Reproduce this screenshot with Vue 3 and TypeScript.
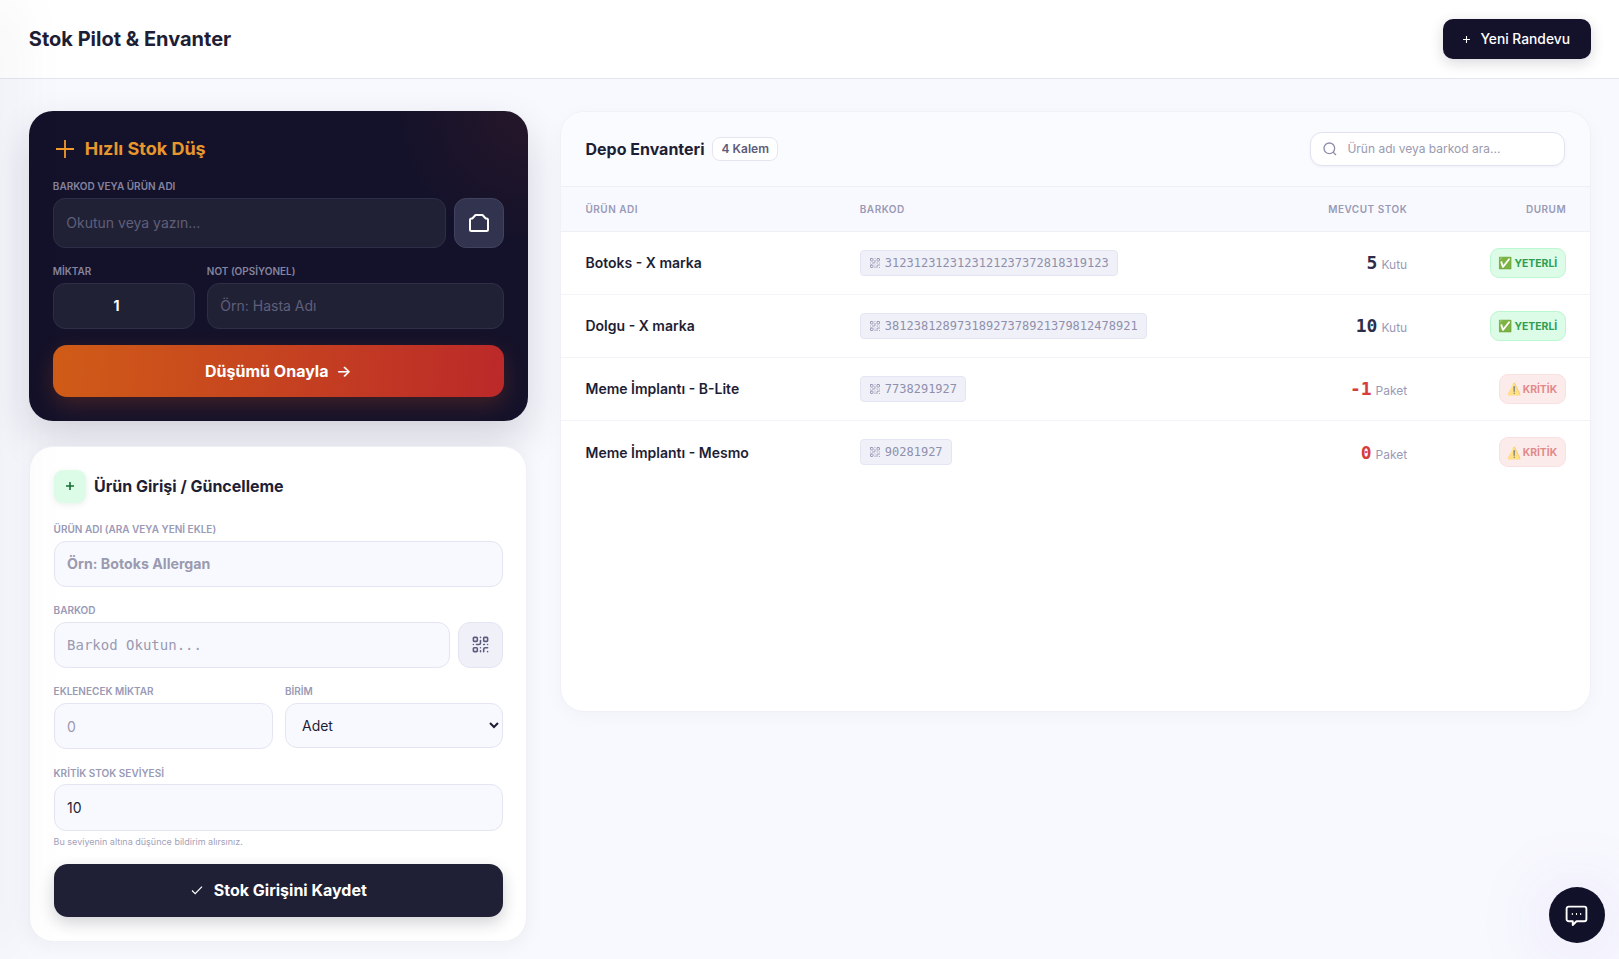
<script setup lang="ts">
interface StockItem {
  name: string
  barcode: string
  stock: number
  unit: string
  critical: boolean
}

const items: StockItem[] = [
  { name: 'Botoks - X marka', barcode: '3123123123123121237372818319123', stock: 5, unit: 'Kutu', critical: false },
  { name: 'Dolgu - X marka', barcode: '38123812897318927378921379812478921', stock: 10, unit: 'Kutu', critical: false },
  { name: 'Meme İmplantı - B-Lite', barcode: '7738291927', stock: -1, unit: 'Paket', critical: true },
  { name: 'Meme İmplantı - Mesmo', barcode: '90281927', stock: 0, unit: 'Paket', critical: true }
]

// lucide qr-code, used on the scan button and in the barcode chips
const qrPaths =
  'M4 3h3a1 1 0 0 1 1 1v3a1 1 0 0 1-1 1H4a1 1 0 0 1-1-1V4a1 1 0 0 1 1-1zM17 3h3a1 1 0 0 1 1 1v3a1 1 0 0 1-1 1h-3a1 1 0 0 1-1-1V4a1 1 0 0 1 1-1zM4 16h3a1 1 0 0 1 1 1v3a1 1 0 0 1-1 1H4a1 1 0 0 1-1-1v-3a1 1 0 0 1 1-1zM21 16h-3a2 2 0 0 0-2 2v3M21 21v.01M12 7v3a2 2 0 0 1-2 2H7M3 12h.01M12 3h.01M12 16v.01M16 12h1M21 12v.01M12 21v-1'
</script>

<template>
  <div class="page">
    <div class="edge-shadow"></div>

    <header class="topbar">
      <h1 class="page-title">Stok Pilot &amp; Envanter</h1>
      <button class="new-btn">
        <svg class="new-plus" viewBox="0 0 10 10" aria-hidden="true"><path d="M5 1.200v7.600M1.200 5h7.600" /></svg>
        Yeni Randevu
      </button>
    </header>

    <main class="layout">
      <div class="left-col">
        <section class="quick-card">
          <h2 class="quick-title">
            <svg class="quick-plus" viewBox="0 0 18 18" aria-hidden="true"><path d="M9 0v18M0 9h18" /></svg>
            Hızlı Stok Düş
          </h2>

          <label class="dark-label">BARKOD VEYA ÜRÜN ADI</label>
          <div class="scan-row">
            <input class="dark-input scan-input" placeholder="Okutun veya yazın..." />
            <button class="camera-btn" aria-label="Kamera">
              <svg viewBox="0 0 20 18" width="20" height="18" aria-hidden="true">
                <path
                  d="M6.500 1h7l3.200 3.500h.8a1.500 1.500 0 0 1 1.500 1.500v9.500a1.500 1.500 0 0 1-1.500 1.500h-15A1.500 1.500 0 0 1 1 15.500V6a1.500 1.500 0 0 1 1.500-1.500h.8z"
                />
              </svg>
            </button>
          </div>

          <div class="qty-row">
            <div>
              <label class="dark-label">MİKTAR</label>
              <input class="dark-input qty-input" value="1" />
            </div>
            <div>
              <label class="dark-label">NOT (OPSİYONEL)</label>
              <input class="dark-input note-input" placeholder="Örn: Hasta Adı" />
            </div>
          </div>

          <button class="confirm-btn">Düşümü Onayla <span class="arrow">→</span></button>
        </section>

        <section class="entry-card">
          <div class="entry-head">
            <span class="entry-icon">
              <svg viewBox="0 0 10 10" width="10" height="10" aria-hidden="true"><path d="M5 1v8M1 5h8" /></svg>
            </span>
            <h2 class="entry-title">Ürün Girişi / Güncelleme</h2>
          </div>

          <label class="field-label">ÜRÜN ADI (ARA VEYA YENİ EKLE)</label>
          <input class="light-input name-input" placeholder="Örn: Botoks Allergan" />

          <label class="field-label next">BARKOD</label>
          <div class="barcode-row">
            <input class="light-input mono-input" placeholder="Barkod Okutun..." />
            <button class="qr-btn" aria-label="Barkod tara">
              <svg viewBox="0 0 24 24" width="19" height="19" aria-hidden="true"><path :d="qrPaths" /></svg>
            </button>
          </div>

          <div class="unit-row">
            <div>
              <label class="field-label next">EKLENECEK MİKTAR</label>
              <input class="light-input" placeholder="0" />
            </div>
            <div>
              <label class="field-label next">BİRİM</label>
              <select class="light-input unit-select">
                <option>Adet</option>
                <option>Kutu</option>
                <option>Paket</option>
              </select>
            </div>
          </div>

          <label class="field-label next">KRİTİK STOK SEVİYESİ</label>
          <input class="light-input" value="10" />
          <p class="help">Bu seviyenin altına düşünce bildirim alırsınız.</p>

          <button class="save-btn">
            <svg viewBox="0 0 12 12" width="12" height="12" aria-hidden="true"><path d="M1 6.500 4.200 9.600 11 2.600" /></svg>
            Stok Girişini Kaydet
          </button>
        </section>
      </div>

      <section class="inventory">
        <div class="inv-head">
          <div class="inv-title-wrap">
            <h2 class="inv-title">Depo Envanteri</h2>
            <span class="count-badge">4 Kalem</span>
          </div>
          <div class="search">
            <svg viewBox="0 0 24 24" width="16" height="16" aria-hidden="true">
              <circle cx="11" cy="11" r="8" />
              <path d="m21 21-4.300-4.300" />
            </svg>
            <input placeholder="Ürün adı veya barkod ara..." />
          </div>
        </div>

        <div class="grid-row table-head">
          <span>ÜRÜN ADI</span>
          <span>BARKOD</span>
          <span class="to-right">MEVCUT STOK</span>
          <span class="to-right">DURUM</span>
        </div>

        <div v-for="item in items" :key="item.barcode" class="grid-row item-row">
          <span class="item-name">{{ item.name }}</span>
          <span class="barcode-cell">
            <span class="chip">
              <svg viewBox="0 0 24 24" width="12" height="12" aria-hidden="true"><path :d="qrPaths" /></svg>
              {{ item.barcode }}
            </span>
          </span>
          <span class="to-right stock-cell">
            <b class="stock-num" :class="{ low: item.critical }">{{ item.stock }}</b>
            <span class="unit">{{ item.unit }}</span>
          </span>
          <span class="to-right">
            <span class="status" :class="item.critical ? 'status-bad' : 'status-ok'">
              <span class="status-emoji">{{ item.critical ? '⚠️' : '✅' }}</span>{{ item.critical ? 'KRİTİK' : 'YETERLİ' }}
            </span>
          </span>
        </div>
      </section>
    </main>

    <button class="chat-btn" aria-label="Destek">
      <svg viewBox="0 0 24 24" width="25" height="25" aria-hidden="true">
        <path d="M4.500 3.500h15a2 2 0 0 1 2 2v10a2 2 0 0 1-2 2H12l-3.600 3.600v-3.600H4.500a2 2 0 0 1-2-2v-10a2 2 0 0 1 2-2z" />
        <path class="dots" d="M7.500 10.500h1M11.500 10.500h1M15.500 10.500h1" />
      </svg>
    </button>
  </div>
</template>

<style>
html,
body {
  margin: 0;
  background: #f8f9fe;
  overflow: hidden;
}
</style>

<style scoped>
.page {
  position: relative;
  height: 959px;
  overflow: hidden;
  background: #f8f9fe;
  font-family: Inter, "Noto Sans", sans-serif;
  color: #1e1e35;
}

.edge-shadow {
  position: absolute;
  top: 0;
  bottom: 0;
  left: -8px;
  width: 8px;
  z-index: 3;
  box-shadow: 0 0 60px rgba(30, 30, 70, 0.22);
}

.topbar {
  height: 78px;
  background: #fff;
  border-bottom: 1px solid #e2e6f2;
  display: flex;
  align-items: center;
  justify-content: space-between;
  padding: 0 27.800px 0 28.800px;
}

.page-title {
  margin: 0;
  font-size: 20px;
  font-weight: 700;
  color: #1e1e35;
}

.new-btn {
  height: 40px;
  width: 148px;
  display: flex;
  align-items: center;
  justify-content: center;
  gap: 9px;
  padding-right: 8px;
  background: #14122b;
  color: #fff;
  border: 0;
  border-radius: 10px;
  font: 500 13.800px Inter, sans-serif;
  box-shadow: 0 4px 14px rgba(20, 18, 43, 0.16);
}

.new-plus {
  width: 9px;
  height: 9px;
  fill: none;
  stroke: #fff;
  stroke-width: 1.200;
}

.layout {
  display: grid;
  grid-template-columns: 499px 1fr;
  gap: 32px;
  align-items: start;
  padding: 31.500px 27.800px 0 28.800px;
}

.left-col {
  display: flex;
  flex-direction: column;
  gap: 25px;
}

.quick-card {
  box-sizing: border-box;
  padding: 25px 24px 23.500px;
  border-radius: 24px;
  background:
    radial-gradient(circle at 100% 0, rgba(110, 40, 40, 0.2), transparent 130px),
    #14122a;
  box-shadow: 0 18px 40px rgba(20, 18, 43, 0.16);
}

.quick-title {
  display: flex;
  align-items: center;
  gap: 11px;
  margin: 0 0 18px;
  padding-left: 3px;
  font-size: 18px;
  line-height: 26px;
  font-weight: 700;
  color: #e8962e;
}

.quick-plus {
  width: 18px;
  height: 18px;
  fill: none;
  stroke: #f09a2c;
  stroke-width: 1.800;
}

.dark-label {
  display: block;
  font-size: 10px;
  line-height: 13px;
  font-weight: 600;
  color: #84849f;
  margin-bottom: 5px;
}

.scan-row {
  display: flex;
  gap: 8px;
  margin-bottom: 17px;
}

.dark-input {
  box-sizing: border-box;
  width: 100%;
  height: 46.500px;
  padding: 0 12.500px;
  border: 1px solid #2e2e48;
  border-radius: 12px;
  background: #212136;
  color: #fff;
  font: 400 14px Inter, sans-serif;
  outline: none;
}

.dark-input::placeholder {
  color: #5f5f79;
}

.scan-input {
  height: 50px;
  flex: 1;
  min-width: 0;
}

.camera-btn {
  width: 50px;
  height: 50px;
  flex: none;
  display: flex;
  align-items: center;
  justify-content: center;
  padding: 0;
  border: 1px solid #41425f;
  border-radius: 12px;
  background: #32334e;
}

.camera-btn svg {
  fill: none;
  stroke: #fff;
  stroke-width: 2;
  stroke-linejoin: round;
}

.qty-row {
  display: grid;
  grid-template-columns: 142px 1fr;
  gap: 12px;
}

.qty-input {
  padding-right: 27px;
  text-align: center;
  font-weight: 700;
}

.confirm-btn {
  display: block;
  width: 100%;
  height: 52.500px;
  margin-top: 15.500px;
  border: 0;
  border-radius: 14px;
  background: linear-gradient(95deg, #d05c17, #bb2929);
  color: #fff;
  font: 700 16px Inter, sans-serif;
  box-shadow: 0 8px 22px rgba(210, 80, 30, 0.24);
}

.arrow {
  margin-left: 4px;
  font-weight: 500;
}

.entry-card {
  box-sizing: border-box;
  margin: 0 0.400px;
  padding: 23px 23.400px 24.600px;
  background: #fff;
  border: 1px solid #f0f1f7;
  border-radius: 24px;
  box-shadow: 0 4px 20px rgba(30, 30, 70, 0.05);
}

.entry-head {
  display: flex;
  align-items: center;
  gap: 8.500px;
  margin-bottom: 20.500px;
}

.entry-icon {
  width: 32px;
  height: 33px;
  display: flex;
  align-items: center;
  justify-content: center;
  background: #dcfce7;
  border-radius: 9px;
  box-shadow: 0 2px 6px rgba(30, 120, 60, 0.1);
}

.entry-icon svg {
  fill: none;
  stroke: #166f35;
  stroke-width: 1.600;
}

.entry-title {
  margin: 0;
  font-size: 16px;
  font-weight: 700;
  color: #1e1e35;
}

.field-label {
  display: block;
  font-size: 10px;
  line-height: 13px;
  font-weight: 600;
  color: #9a9ab6;
  margin-bottom: 4.500px;
}

.field-label.next {
  margin-top: 17.200px;
}

.light-input {
  display: block;
  box-sizing: border-box;
  width: 100%;
  height: 46.500px;
  padding: 0 12.500px;
  border: 1px solid #e3e5f2;
  border-radius: 12px;
  background: #f8f9fe;
  color: #1e1e35;
  font: 400 14px Inter, sans-serif;
  outline: none;
}

.light-input::placeholder {
  color: #9a9ab0;
}

.name-input {
  font-size: 14.200px;
  font-weight: 700;
}

.barcode-row {
  display: flex;
  gap: 8px;
}

.mono-input {
  flex: 1;
  min-width: 0;
  font: 400 14px "DejaVu Sans Mono", monospace;
}

.qr-btn {
  width: 45.500px;
  height: 46.500px;
  flex: none;
  display: flex;
  align-items: center;
  justify-content: center;
  padding: 0;
  border: 1px solid #e3e5f2;
  border-radius: 12px;
  background: #f0f1f8;
}

.qr-btn svg,
.chip svg {
  flex: none;
  fill: none;
  stroke: #5c5c80;
  stroke-width: 2;
  stroke-linecap: round;
  stroke-linejoin: round;
}

.unit-row {
  display: grid;
  grid-template-columns: 219px 1fr;
  gap: 12.400px;
}

.unit-select {
  height: 45.500px;
  padding: 0 12px;
}

.help {
  margin: 5.500px 0 0;
  font-size: 9px;
  line-height: 12px;
  color: #a2a2ba;
}

.save-btn {
  width: 100%;
  height: 53px;
  margin-top: 15.500px;
  display: flex;
  align-items: center;
  justify-content: center;
  gap: 11px;
  padding-left: 7px;
  border: 0;
  border-radius: 14px;
  background: #1f2036;
  color: #fff;
  font: 700 16px Inter, sans-serif;
  box-shadow: 0 6px 16px rgba(30, 30, 55, 0.2);
}

.save-btn svg {
  fill: none;
  stroke: #fff;
  stroke-width: 1.200;
}

.inventory {
  height: 601px;
  box-sizing: border-box;
  overflow: hidden;
  background: #fff;
  border: 1px solid #f0f1f7;
  border-radius: 24px;
  box-shadow: 0 4px 20px rgba(30, 30, 70, 0.03);
}

.inv-head {
  height: 75px;
  box-sizing: border-box;
  padding: 0 24.800px 0 24.700px;
  display: flex;
  align-items: center;
  justify-content: space-between;
  background: #fafbff;
  border-bottom: 1px solid #eef0f7;
}

.inv-title-wrap {
  display: flex;
  align-items: center;
  gap: 7.500px;
}

.inv-title {
  margin: 0;
  font-size: 16px;
  font-weight: 700;
  color: #1e1e35;
}

.count-badge {
  height: 22px;
  line-height: 22px;
  padding: 0 8.500px;
  background: #fff;
  border: 1px solid #e3e5f2;
  border-radius: 8px;
  font-size: 12px;
  font-weight: 600;
  color: #5c5c7a;
}

.search {
  width: 255px;
  height: 34px;
  box-sizing: border-box;
  display: flex;
  align-items: center;
  gap: 8px;
  padding: 0 11px;
  background: #fff;
  border: 1px solid #e0e2ef;
  border-radius: 12px;
  box-shadow: 0 1px 3px rgba(30, 30, 70, 0.05);
}

.search svg {
  flex: none;
  fill: none;
  stroke: #8e8eaa;
  stroke-width: 2;
}

.search input {
  flex: 1;
  min-width: 0;
  border: 0;
  outline: none;
  padding: 0 0 0 1px;
  background: transparent;
  font: 400 12px Inter, sans-serif;
}

.search input::placeholder {
  color: #9a9ab0;
}

.grid-row {
  display: grid;
  grid-template-columns: 274.300px 1fr 140px 159px;
  align-items: center;
  padding: 0 24px 0 24.700px;
}

.table-head {
  height: 45px;
  box-sizing: border-box;
  background: #f8f9fe;
  border-bottom: 1px solid #eef0f7;
  font-size: 10px;
  font-weight: 600;
  letter-spacing: 0.05em;
  color: #9a9ab6;
}

.to-right {
  text-align: right;
}

.item-row {
  height: 63px;
  box-sizing: border-box;
  border-bottom: 1px solid #f3f4f9;
}

.item-row:last-child {
  border-bottom: 0;
}

.item-name {
  font-size: 14px;
  font-weight: 600;
  color: #1e1e35;
}

.chip {
  display: inline-flex;
  align-items: center;
  gap: 4px;
  height: 26px;
  box-sizing: border-box;
  padding: 0 8px;
  background: #f0f1f8;
  border: 1px solid #e3e5f2;
  border-radius: 4px;
  font: 400 12px "DejaVu Sans Mono", monospace;
  color: #8f8fac;
}

.chip svg {
  stroke: #9a9ab6;
}

.stock-num {
  font: 700 18px "DejaVu Sans Mono", monospace;
  color: #2d2d4a;
}

.stock-num.low {
  color: #d63c3c;
}

.unit {
  margin-left: 4px;
  font-size: 12px;
  color: #9a9ab6;
}

.status {
  display: inline-flex;
  align-items: center;
  height: 30px;
  box-sizing: border-box;
  padding: 1px 8px 0 7px;
  border-radius: 9px;
  font-size: 10.400px;
  font-weight: 700;
  border: 1px solid;
}

.status-emoji {
  font-size: 11.500px;
  margin-right: 2px;
}

.status-ok {
  background: #dcfce7;
  border-color: #bbf7d0;
  color: #2f9e52;
}

.status-bad {
  background: #f9dede;
  border-color: #f8cccc;
  color: #d03c3c;
  opacity: 0.6;
}

.chat-btn {
  position: absolute;
  right: 14.500px;
  bottom: 16px;
  width: 56px;
  height: 56px;
  display: flex;
  align-items: center;
  justify-content: center;
  padding: 0;
  border: 0;
  border-radius: 50%;
  background: #12112a;
  box-shadow: 0 6px 70px 10px rgba(130, 90, 230, 0.12);
}

.chat-btn svg {
  fill: none;
  stroke: #fff;
  stroke-width: 1.800;
  stroke-linejoin: round;
}

.chat-btn .dots {
  stroke-width: 1.800;
}
</style>
